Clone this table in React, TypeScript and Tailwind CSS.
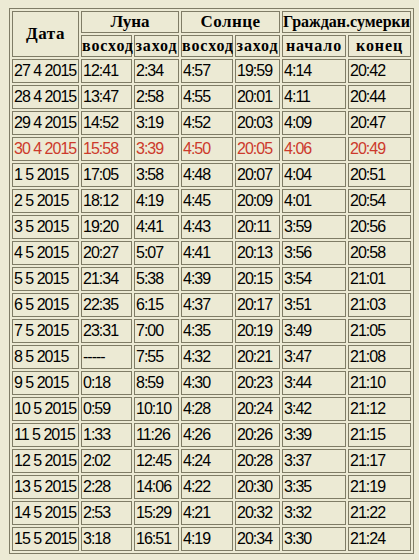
const ROWS: string[][] = [
  ['27 4 2015', '12:41', '2:34', '4:57', '19:59', '4:14', '20:42'],
  ['28 4 2015', '13:47', '2:58', '4:55', '20:01', '4:11', '20:44'],
  ['29 4 2015', '14:52', '3:19', '4:52', '20:03', '4:09', '20:47'],
  ['30 4 2015', '15:58', '3:39', '4:50', '20:05', '4:06', '20:49'],
  ['1 5 2015', '17:05', '3:58', '4:48', '20:07', '4:04', '20:51'],
  ['2 5 2015', '18:12', '4:19', '4:45', '20:09', '4:01', '20:54'],
  ['3 5 2015', '19:20', '4:41', '4:43', '20:11', '3:59', '20:56'],
  ['4 5 2015', '20:27', '5:07', '4:41', '20:13', '3:56', '20:58'],
  ['5 5 2015', '21:34', '5:38', '4:39', '20:15', '3:54', '21:01'],
  ['6 5 2015', '22:35', '6:15', '4:37', '20:17', '3:51', '21:03'],
  ['7 5 2015', '23:31', '7:00', '4:35', '20:19', '3:49', '21:05'],
  ['8 5 2015', '-----', '7:55', '4:32', '20:21', '3:47', '21:08'],
  ['9 5 2015', '0:18', '8:59', '4:30', '20:23', '3:44', '21:10'],
  ['10 5 2015', '0:59', '10:10', '4:28', '20:24', '3:42', '21:12'],
  ['11 5 2015', '1:33', '11:26', '4:26', '20:26', '3:39', '21:15'],
  ['12 5 2015', '2:02', '12:45', '4:24', '20:28', '3:37', '21:17'],
  ['13 5 2015', '2:28', '14:06', '4:22', '20:30', '3:35', '21:19'],
  ['14 5 2015', '2:53', '15:29', '4:21', '20:32', '3:32', '21:22'],
  ['15 5 2015', '3:18', '16:51', '4:19', '20:34', '3:30', '21:24'],
];

// today's row is highlighted in red
const TODAY = '30 4 2015';

const cell = 'border border-[#7f7c66] p-0';
const head = `${cell} text-center font-bold font-['Liberation_Serif',serif] text-black`;

export default function App() {
  return (
    <div className="min-h-[560px] w-[419px] bg-[#ecead4] pt-[8px] pl-[9px]">
      <table className="w-[405px] table-fixed border-separate border-spacing-[2px] border border-[#7f7c66] bg-[#ecead4]">
        <colgroup>
          <col className="w-[67px]" />
          <col className="w-[51px]" />
          <col className="w-[45px]" />
          <col className="w-[52px]" />
          <col className="w-[45px]" />
          <col className="w-[64px]" />
          <col className="w-[63px]" />
        </colgroup>
        <thead>
          <tr className="h-[21px]">
            <th rowSpan={2} className={`${head} text-[17px] tracking-[0.5px]`}>
              Дата
            </th>
            <th colSpan={2} className={`${head} text-[17px] leading-[20px]`}>
              Луна
            </th>
            <th colSpan={2} className={`${head} text-[17px] leading-[20px] tracking-[0.5px]`}>
              Солнце
            </th>
            <th colSpan={2} className={`${head} text-[16px] leading-[20px] whitespace-nowrap`}>
              Граждан.сумерки
            </th>
          </tr>
          <tr className="h-[22px]">
            {['восход', 'заход', 'восход', 'заход', 'начало', 'конец'].map((t, i) => (
              <th
                key={i}
                className={`${head} text-[16px] leading-[20px] tracking-[0.9px] whitespace-nowrap`}
              >
                {t}
              </th>
            ))}
          </tr>
        </thead>
        <tbody>
          {ROWS.map((r) => (
            <tr key={r[0]} className="h-[24px]">
              {r.map((v, i) => (
                <td
                  key={i}
                  className={`${cell} pl-[1px] text-left whitespace-nowrap font-['Liberation_Sans',sans-serif] text-[16px] tracking-[-1px] leading-[20px] ${
                    r[0] === TODAY ? 'text-[#cc3a2c]' : 'text-black'
                  }`}
                >
                  {v}
                </td>
              ))}
            </tr>
          ))}
        </tbody>
      </table>
    </div>
  );
}
